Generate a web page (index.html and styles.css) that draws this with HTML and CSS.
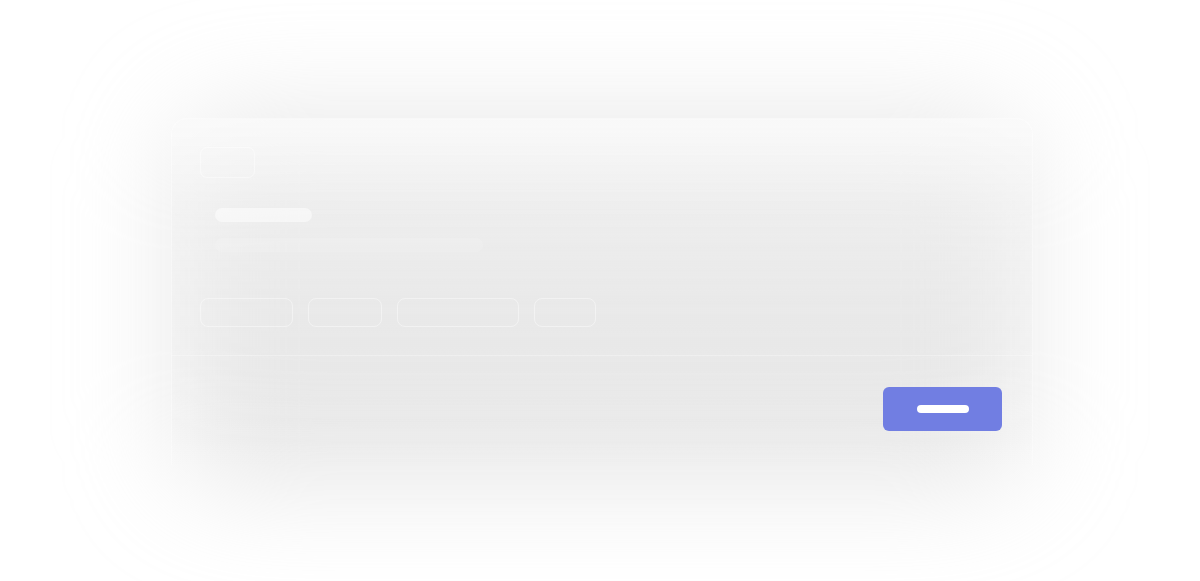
FILE: index.html
```html
<!DOCTYPE html>
<html lang="en">
<head>
<meta charset="utf-8">
<title>Dialog</title>
<link rel="stylesheet" href="styles.css">
</head>
<body>
<div class="stage">
  <div class="glow"></div>
  <section class="card">
    <div class="card-body">
      <div class="icon-box"></div>
      <div class="title-bar"></div>
      <div class="sub-bar"></div>
      <div class="chips">
        <span class="chip chip-a"></span>
        <span class="chip chip-b"></span>
        <span class="chip chip-c"></span>
        <span class="chip chip-d"></span>
      </div>
    </div>
    <div class="card-footer">
      <button class="primary" type="button"><span class="primary-label"></span></button>
    </div>
  </section>
</div>
</body>
</html>
```
FILE: styles.css
```css
* { box-sizing: border-box; }
html, body {
  margin: 0;
  padding: 0;
  background: #ffffff;
  font-family: "Inter", "Liberation Sans", sans-serif;
  overflow: hidden;
}
.stage {
  position: relative;
  width: 1200px;
  height: 581px;
  padding: 118px 0 0 171px;
}
.glow {
  position: absolute;
  left: 175px;
  top: 115px;
  width: 850px;
  height: 370px;
  border-radius: 60px;
  background: rgba(210, 210, 210, 0.52);
  filter: blur(55px);
}
.card {
  position: relative;
  width: 862px;
  border-radius: 16px 16px 0 0;
  background: linear-gradient(to bottom,
      rgba(250, 250, 250, 0.85) 0%,
      rgba(242, 242, 242, 0.55) 25%,
      rgba(236, 236, 236, 0.3) 55%,
      rgba(236, 236, 236, 0) 100%);
  border: 1px solid rgba(255, 255, 255, 0.4);
  border-bottom: none;
}
.card-body {
  padding: 28px 28px 28px 28px;
  border-bottom: 1px solid rgba(255, 255, 255, 0.3);
}
.icon-box {
  width: 55px;
  height: 31px;
  border-radius: 7px;
  border: 1px solid rgba(255, 255, 255, 0.45);
}
.title-bar {
  margin: 30px 0 0 15px;
  width: 97px;
  height: 14px;
  border-radius: 7px;
  background: rgba(255, 255, 255, 0.5);
}
.sub-bar {
  margin: 16px 0 0 15px;
  width: 268px;
  height: 14px;
  border-radius: 7px;
  background: rgba(255, 255, 255, 0.14);
}
.chips {
  display: flex;
  gap: 15px;
  margin-top: 46px;
}
.chip {
  display: block;
  height: 29px;
  border-radius: 8px;
  border: 1.5px solid rgba(255, 255, 255, 0.42);
}
.chip-a { width: 93px; }
.chip-b { width: 74px; }
.chip-c { width: 122px; }
.chip-d { width: 62px; }
.card-footer {
  display: flex;
  justify-content: flex-end;
  padding: 31px 30px 34px 28px;
}
.primary {
  display: flex;
  align-items: center;
  justify-content: center;
  width: 119px;
  height: 44px;
  border: none;
  border-radius: 6px;
  background: #717ee2;
  padding: 0;
}
.primary-label {
  display: block;
  width: 52px;
  height: 8px;
  border-radius: 4px;
  background: #ffffff;
}
```
